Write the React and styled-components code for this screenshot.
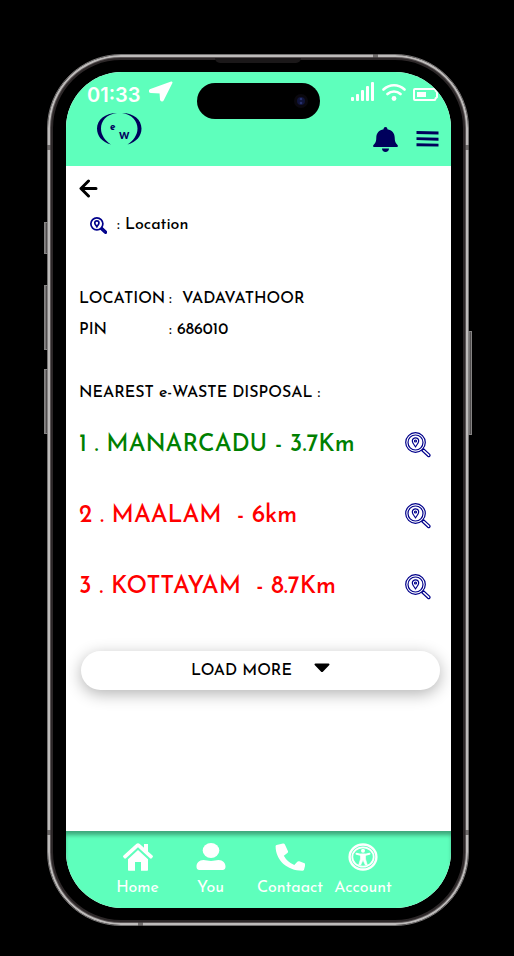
import React from 'react';
import styled, { createGlobalStyle } from 'styled-components';

const MINT = '#5effbc';
const NAVY = '#00005c';

const GlobalStyle = createGlobalStyle`
  *, *::before, *::after { box-sizing: border-box; }
  body {
    margin: 0;
    background: #000;
    font-family: "Josefin Sans", Lato, sans-serif;
    color: #000;
  }
  button { font: inherit; color: inherit; background: none; border: 0; padding: 0; cursor: pointer; }
  a { color: inherit; text-decoration: none; }
  svg { display: block; flex: none; }
`;

const Page = styled.div`
  min-height: 100vh;
  display: flex;
  padding: 54px 45px 30px 47px;
`;

const Phone = styled.div`
  position: relative;
  flex: 1;
  display: flex;
  padding: 17px 17px 17px 18px;
  border: 1px solid #757373;
  border-radius: 74px;
  background: #000;
  box-shadow: inset 0 0 0 2px #bdbbba, inset 0 0 0 3px #5a5455, inset 0 0 0 5px #2c2728;
`;

const SideKey = styled.span`
  position: absolute;
  top: ${(p) => p.$top}px;
  height: ${(p) => p.$height}px;
  width: 4px;
  ${(p) => p.$side}: -4px;
  background: linear-gradient(90deg, #8b8989, #3d3a3b);
  border: 1px solid #858383;
`;

const Antenna = styled.span`
  position: absolute;
  ${(p) => p.$edge}: -1px;
  ${(p) => p.$from}: 90px;
  width: ${(p) => (p.$edge === 'top' || p.$edge === 'bottom' ? 5 : 4)}px;
  height: ${(p) => (p.$edge === 'top' || p.$edge === 'bottom' ? 4 : 5)}px;
  background: rgba(60, 56, 57, 0.6);
`;

const Earpiece = styled.span`
  position: absolute;
  top: 3px;
  left: 50%;
  width: 86px;
  height: 5px;
  margin-left: -43px;
  border-radius: 0 0 5px 5px;
  background: #1b1819;
`;

const Screen = styled.div`
  position: relative;
  flex: 1;
  display: flex;
  flex-direction: column;
  overflow: hidden;
  border-radius: 56px;
  background: #fff;
`;

const Header = styled.header`
  padding: 8px 12px 14px 21px;
  background: ${MINT};
`;

const StatusBar = styled.div`
  display: flex;
  align-items: flex-end;
  justify-content: space-between;
  height: 22px;
  color: #fff;
`;

const StatusGroup = styled.div`
  display: flex;
  align-items: flex-end;
  gap: ${(p) => p.$gap}px;
`;

const Time = styled.time`
  font: 600 20px/14px Inter, sans-serif;
`;

const Island = styled.div`
  position: absolute;
  top: 11px;
  left: 50%;
  width: 123px;
  height: 36px;
  margin-left: -62px;
  padding-right: 12px;
  display: flex;
  align-items: center;
  justify-content: flex-end;
  border-radius: 18px;
  background: #000;
`;

const BrandBar = styled.div`
  display: flex;
  justify-content: space-between;
  height: 50px;
  padding: 10px 0 0 9px;
`;

const HeaderActions = styled.div`
  display: flex;
  align-items: center;
  align-self: flex-end;
  gap: 18px;
  height: 26px;
  color: ${NAVY};
`;

const Content = styled.main`
  flex: 1;
  display: flex;
  flex-direction: column;
  align-items: stretch;
  padding: 12px 11px 40px 13px;
`;

const BackButton = styled.button`
  align-self: flex-start;
`;

const Legend = styled.p`
  display: flex;
  align-items: center;
  gap: 10px;
  margin: 17px 0 0;
  padding-left: 11px;
  font-size: 16px;
  line-height: 20px;
  font-weight: 500;
`;

const Details = styled.dl`
  display: grid;
  gap: 11px;
  margin: 54px 0 0;
  font-size: 16px;
  line-height: 20px;
  font-weight: 500;
`;

const Detail = styled.div`
  display: flex;
  white-space: pre;
  dt { width: 90px; }
  dd { margin: 0; }
`;

const Heading = styled.h2`
  margin: 43px 0 0;
  font-size: 16px;
  line-height: 20px;
  font-weight: 500;
`;

const Sites = styled.ul`
  display: grid;
  gap: 43px;
  margin: 28px 0 0;
  padding: 0 9px 0 0;
  list-style: none;
`;

const Site = styled.li`
  display: flex;
  align-items: center;
  justify-content: space-between;
  height: 28px;
  font-size: 24px;
  line-height: 28px;
  font-weight: 500;
  white-space: pre;
  color: ${(p) => (p.$near ? '#008000' : '#ff0000')};
`;

const LoadMore = styled.button`
  display: flex;
  align-items: center;
  justify-content: center;
  gap: 22px;
  height: 39px;
  margin: 50px 0 0 2px;
  border-radius: 20px;
  background: #fff;
  box-shadow: 0 4px 16px rgba(0, 0, 0, 0.3);
  font-size: 16px;
  font-weight: 500;
`;

const TabBar = styled.nav`
  display: grid;
  grid-template-columns: 71fr 75fr 84fr 62fr;
  height: 77px;
  padding: 11px 57px 0 36px;
  background: ${MINT};
  box-shadow: inset 0 5px 4px -1px rgba(0, 0, 0, 0.35);
  color: #fff;
`;

const Tab = styled.a`
  display: flex;
  flex-direction: column;
  align-items: center;
  gap: 7px;
  font-size: 16px;
  line-height: 20px;
  font-weight: 400;
`;

const TabIcon = styled.span`
  display: flex;
  align-items: center;
  height: 29px;
`;

function SearchPlace({ size, bold }) {
  const w = bold ? 2.6 : 1.2;
  return (
    <svg width={size} height={size} viewBox="0 0 26 26" fill="none" stroke="#00008b" strokeWidth={w}>
      <circle cx="10.5" cy="10.5" r={bold ? 9.2 : 9.8} />
      {!bold && <circle cx="10.5" cy="10.5" r="7.5" />}
      <path d="M10.5 14.8C8.8 12.4 7.3 10.8 7.3 9a3.2 3.2 0 0 1 6.4 0c0 1.8-1.5 3.4-3.2 5.8z" />
      {!bold && <circle cx="10.5" cy="9" r="1" />}
      <path d="M16.8 18.7l1.9-1.9 6 5.6a1.35 1.35 0 0 1-1.9 1.9z" />
    </svg>
  );
}

function Logo() {
  return (
    <svg width="46" height="34" viewBox="0 0 46 34" fill={NAVY} role="img" aria-label="ew">
      <path d="M21 1C9 1 1 8 1 16.500c0 7.500 5 13.500 14 16C9 28.500 5 23 5 16.500 5 9 10 2.500 21 1z" />
      <path d="M26 1c12 0 19.500 7 19.500 15.500 0 7.500-5 13.500-14 16 6-4 10-9.500 10-16C41.500 9 36 2.500 26 1z" />
      <text x="14" y="18" fontFamily="Josefin Sans" fontWeight="700" fontSize="10">e</text>
      <text x="23" y="27" fontFamily="Lato" fontWeight="700" fontSize="13">w</text>
    </svg>
  );
}

const LocationArrow = () => (
  <svg width="24" height="21" viewBox="0 0 24 21" fill="#fff" stroke="#fff" strokeWidth="2" strokeLinejoin="round">
    <path d="M22.500 1.500L14 18.500c-.5 1.200-1.800 1.200-2 0L11.500 11.500 2 11c-1.500 0-1.500-1.500-.3-2z" />
  </svg>
);

const Signal = () => (
  <svg width="24" height="20" viewBox="0 0 24 20" fill="#fff">
    <rect x="0" y="15" width="3" height="4" rx="1" />
    <rect x="5" y="12" width="3" height="7" rx="1" />
    <rect x="10" y="8" width="3" height="11" rx="1" />
    <rect x="15" y="4" width="3" height="15" rx="1" />
    <rect x="20" y="0" width="3" height="19" rx="1" />
  </svg>
);

const Wifi = () => (
  <svg width="24" height="19" viewBox="0 0 24 19" fill="none" stroke="#fff" strokeWidth="2.6" strokeLinecap="round">
    <path d="M1.500 6.500c6-5.600 15-5.600 21 0M5.500 11c3.700-3.400 9.300-3.400 13 0" />
    <circle cx="12" cy="15.500" r="2.400" fill="#fff" stroke="none" />
  </svg>
);

const Battery = () => (
  <svg width="26" height="14" viewBox="0 0 26 14" fill="none" stroke="#fff" strokeWidth="2">
    <path d="M2 1h19.500q1 0 1 1.500l1.500 1.500v5l-1.500 1.500q0 1.500-1 1.500H2a1 1 0 0 1-1-1V2a1 1 0 0 1 1-1z" strokeLinejoin="round" />
    <rect x="4" y="4" width="9" height="5" fill="#fff" stroke="none" />
  </svg>
);

const Camera = () => (
  <svg width="14" height="14" viewBox="0 0 14 14">
    <circle cx="7" cy="7" r="7" fill="#0a080e" />
    <circle cx="7" cy="7" r="4" fill="#10143a" />
    <circle cx="7" cy="5" r="1.300" fill="#26306c" />
    <circle cx="7" cy="9" r="1.300" fill="#26306c" />
  </svg>
);

const Bell = () => (
  <svg width="25" height="25" viewBox="0 0 25 25" fill="currentColor">
    <path d="M12.500 0c1.200 0 1.900.8 1.900 2.300 4.500.8 7.300 3.900 7.300 8.200 0 4 .8 5.500 2.800 7.500.8.900.3 2-.9 2H1.400c-1.200 0-1.700-1.100-.9-2 2-2 2.800-3.500 2.800-7.500 0-4.300 2.800-7.400 7.300-8.200C10.600.8 11.300 0 12.500 0zM9 21.500h7c0 2-1.500 3.500-3.500 3.500S9 23.500 9 21.500z" />
  </svg>
);

const Menu = () => (
  <svg width="23" height="16" viewBox="0 0 23 16" fill="currentColor">
    <path d="M.5 0L22.500.6v2.900L.5 2.900zM.5 6.200l22 .6v2.900L.5 9.100zM.5 12.300l22 .4v2.900L.5 15.200z" />
  </svg>
);

const Back = () => (
  <svg width="20" height="20" viewBox="0 0 20 20" fill="none" stroke="#000" strokeWidth="3" strokeLinecap="round" strokeLinejoin="round">
    <path d="M9.500 3L2 10.500 9.500 18M2.500 10.500H17" />
  </svg>
);

const Home = () => (
  <svg width="30" height="28" viewBox="0 0 30 28" fill="#fff">
    <path d="M15 .3c.7 0 1.200.3 1.800.8l4.200 3.700V1h4v7.400l4.500 4c.6.600.6 1.200.1 1.800l-.8 1c-.5.600-1.200.6-1.800.1L15 4.200 3 15.300c-.6.500-1.300.5-1.800-.1l-.8-1c-.5-.6-.5-1.200.1-1.800L13.200 1.100C13.800.6 14.300.3 15 .3z" />
    <path d="M15 7l10 9.200V27q0 .8-.8.800H18V19h-6v8.800H5.800Q5 27.800 5 27V16.200z" />
  </svg>
);

const User = () => (
  <svg width="30" height="27" viewBox="0 0 30 27" fill="#fff">
    <ellipse cx="15" cy="7.500" rx="8.300" ry="7.500" />
    <path d="M7.500 17c2.500 0 4.500 1 7.500 1s5-1 7.500-1c4.500 0 7 3 7 6.500 0 2-.8 3.500-3 3.500h-23C1.300 27 .5 25.500.5 23.500.5 20 3 17 7.500 17z" />
  </svg>
);

const Handset = () => (
  <svg width="30" height="28" viewBox="0 0 30 28" fill="#fff">
    <path d="M1.500 2L8 .6q1.300-.2 1.900 1l3 6.500q.4 1-.5 1.900L8.800 12.800q3.600 6.500 10.500 9.300l3-3.300q.8-.9 2-.5l5.200 2q1.100.5.8 1.700L29 26.700q-.4 1.100-1.600 1.100C12 27.800.6 17 .6 3.300Q.6 2.300 1.500 2z" />
  </svg>
);

const Access = () => (
  <svg width="30" height="28" viewBox="0 0 30 28" fill="none" stroke="#fff">
    <ellipse cx="15" cy="14" rx="13.400" ry="12.500" strokeWidth="2.400" />
    <ellipse cx="15" cy="14" rx="10.700" ry="9.700" strokeWidth="1.800" />
    <circle cx="15" cy="7.800" r="2" fill="#fff" stroke="none" />
    <path d="M8.500 10.800l4 1h5l4-1" strokeWidth="2" strokeLinecap="round" />
    <path d="M12.500 11h5v5l1.800 6h-2L15 17l-2.300 5h-2l1.800-6z" fill="#fff" stroke="#fff" strokeWidth=".6" />
  </svg>
);

const sites = [
  { text: '1 . MANARCADU - 3.7Km', near: true },
  { text: '2 . MAALAM  - 6km' },
  { text: '3 . KOTTAYAM  - 8.7Km' },
];

const tabs = [
  { label: 'Home', icon: <Home /> },
  { label: 'You', icon: <User /> },
  { label: 'Contaact', icon: <Handset /> },
  { label: 'Account', icon: <Access /> },
];

export default function App() {
  return (
    <Page>
      <GlobalStyle />
      <Phone>
        <SideKey $side="left" $top={167} $height={32} />
        <SideKey $side="left" $top={230} $height={65} />
        <SideKey $side="left" $top={314} $height={65} />
        <SideKey $side="right" $top={276} $height={104} />
        <Antenna $edge="top" $from="right" />
        <Antenna $edge="bottom" $from="left" />
        <Antenna $edge="left" $from="top" />
        <Antenna $edge="right" $from="top" />
        <Antenna $edge="left" $from="bottom" />
        <Antenna $edge="right" $from="bottom" />
        <Earpiece />
        <Screen>
          <Header>
            <StatusBar>
              <StatusGroup $gap={9}>
                <Time>01:33</Time>
                <LocationArrow />
              </StatusGroup>
              <StatusGroup $gap={7}>
                <Signal />
                <Wifi />
                <Battery />
              </StatusGroup>
            </StatusBar>
            <BrandBar>
              <Logo />
              <HeaderActions>
                <button aria-label="Notifications"><Bell /></button>
                <button aria-label="Menu"><Menu /></button>
              </HeaderActions>
            </BrandBar>
          </Header>
          <Island><Camera /></Island>
          <Content>
            <BackButton aria-label="Back"><Back /></BackButton>
            <Legend><SearchPlace size={17} bold />: Location</Legend>
            <Details>
              <Detail><dt>LOCATION</dt><dd>{':  VADAVATHOOR'}</dd></Detail>
              <Detail><dt>PIN</dt><dd>: 686010</dd></Detail>
            </Details>
            <Heading>NEAREST e-WASTE DISPOSAL :</Heading>
            <Sites>
              {sites.map((s) => (
                <Site key={s.text} $near={s.near}>
                  {s.text}
                  <button aria-label="Show on map"><SearchPlace size={26} /></button>
                </Site>
              ))}
            </Sites>
            <LoadMore>
              LOAD MORE
              <svg width="16" height="16" viewBox="0 0 16 16"><path d="M1.500.5h13c1 0 1.300 1 .6 1.700l-6 6.300c-.6.700-1.600.7-2.200 0l-6-6.300C.2 1.500.5.5 1.500.5z" /></svg>
            </LoadMore>
          </Content>
          <TabBar>
            {tabs.map((t) => (
              <Tab key={t.label} href="#">
                <TabIcon>{t.icon}</TabIcon>
                {t.label}
              </Tab>
            ))}
          </TabBar>
        </Screen>
      </Phone>
    </Page>
  );
}
